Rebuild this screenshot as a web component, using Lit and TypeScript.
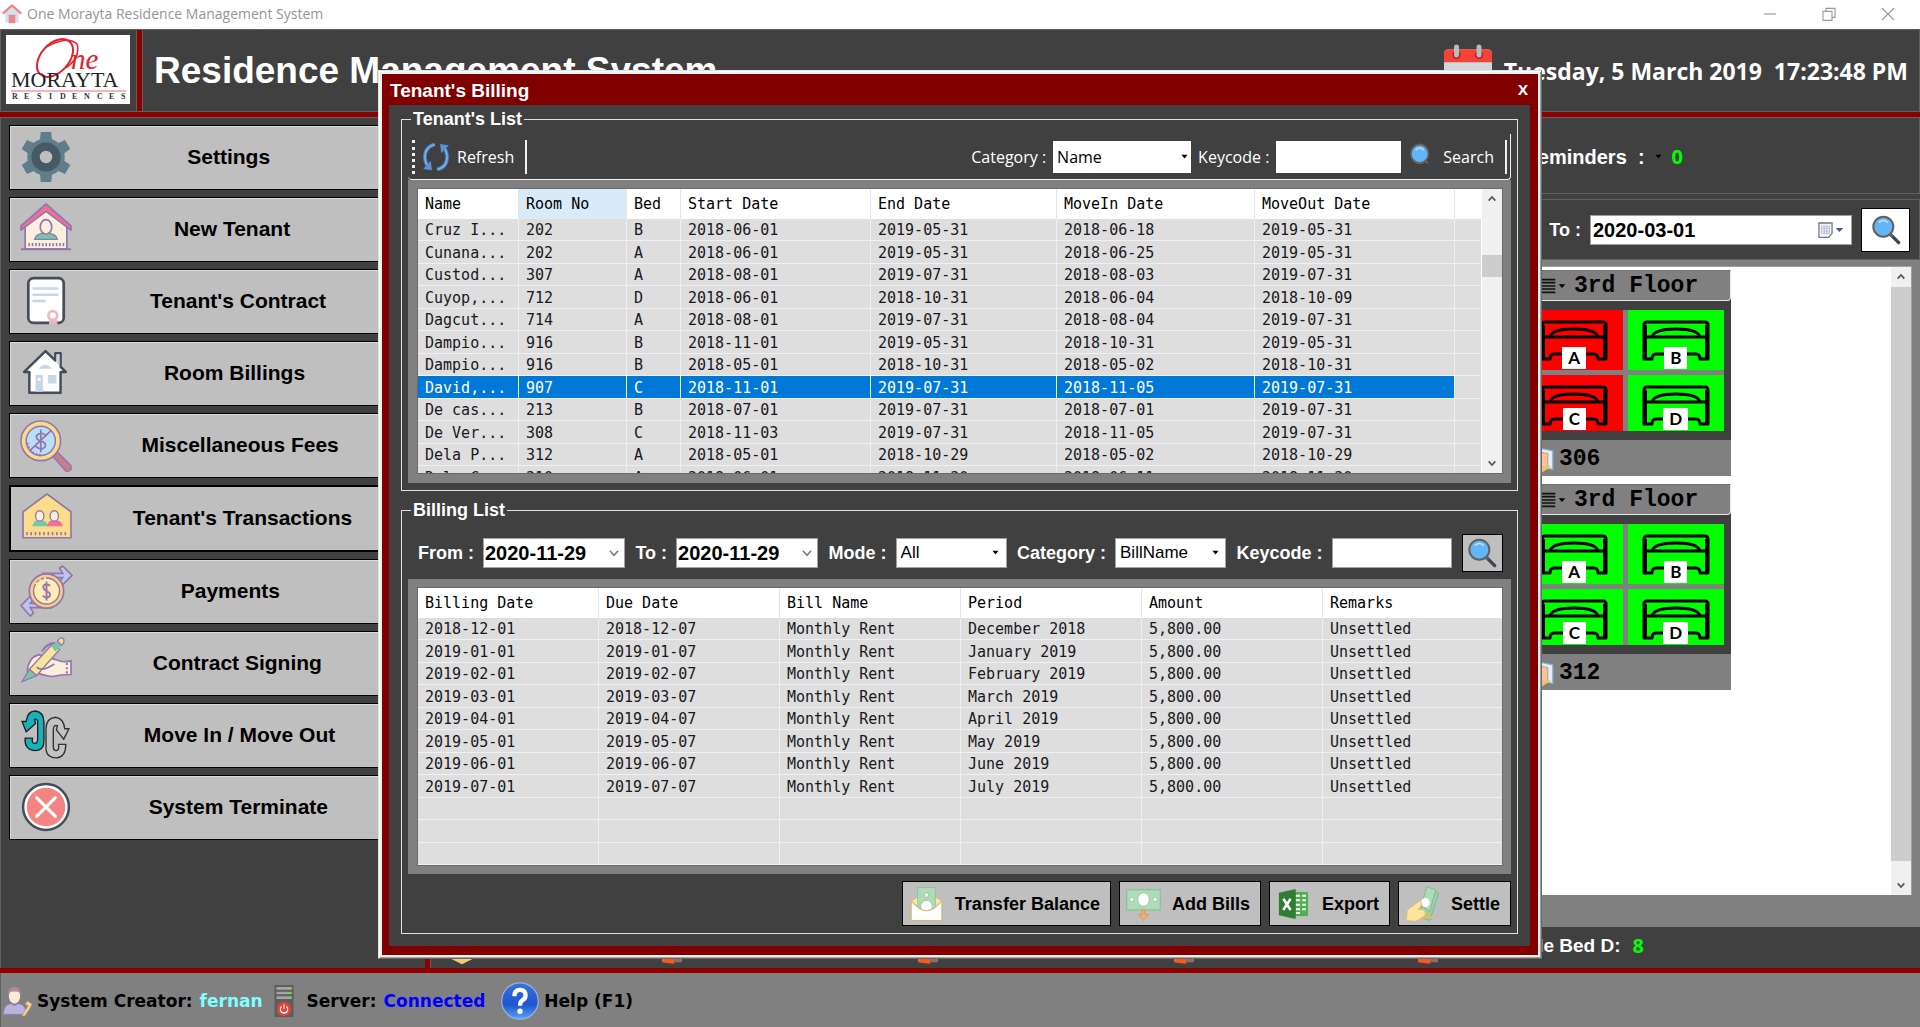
import { LitElement, html, css, svg } from "lit";
import { customElement } from "lit/decorators.js";
import { classMap } from "lit/directives/class-map.js";

const glass = svg`
  <path d="M31 31 L43 43" stroke="#37474f" stroke-width="5" stroke-linecap="round"/>
  <path d="M28 28 L34 34" stroke="#616161" stroke-width="3"/>
  <circle cx="20" cy="19" r="15" fill="#64b5f6" stroke="#616161" stroke-width="3"/>
  <path d="M13 13 Q20 6 27 13" fill="none" stroke="#bbdefb" stroke-width="2.5"/>`;

const P = "#9575ad";

const icons: Record<string, unknown> = {
  glass,
  settings: svg`
    <g fill="#607d8b"><path d="M18 10 L19 0 H29 L30 10z"/><path d="M18 38 L19 48 H29 L30 38z"/>
    <path d="M18 10 L19 0 H29 L30 10z" transform="rotate(60 24 24)"/><path d="M18 10 L19 0 H29 L30 10z" transform="rotate(120 24 24)"/>
    <path d="M18 10 L19 0 H29 L30 10z" transform="rotate(-60 24 24)"/><path d="M18 10 L19 0 H29 L30 10z" transform="rotate(-120 24 24)"/>
    <circle cx="24" cy="24" r="18"/></g>
    <circle cx="24" cy="24" r="10" fill="#bfbfbf" stroke="#455a64" stroke-width="8"/>`,
  tenant: svg`
    <path d="M4 18 L24 4 L44 18 V43 H4z" fill="#faeedd" stroke="${P}" stroke-width="1.6"/>
    <path d="M0 21 L24 0 L48 21 V25 L24 7 L0 25z" fill="#f0709a" stroke="${P}" stroke-width="1.6" stroke-linejoin="round"/>
    <path d="M13 34 Q14 28 24 28 Q34 28 35 34z" fill="#74c8aa" stroke="${P}" stroke-width="1.2"/>
    <ellipse cx="24" cy="22" rx="5.5" ry="7" fill="#faeedd" stroke="${P}" stroke-width="1.6"/>
    <path d="M7 39 H42" stroke="${P}" stroke-width="3" stroke-dasharray="1.5 1.8"/>
    <path d="M0 43.500 H48" stroke="${P}" stroke-width="2"/>`,
  contract: svg`
    <rect x="7" y="2" width="34" height="43" rx="5" fill="#fff" stroke="#464d5a" stroke-width="2.6"/>
    <path d="M12 12h23M12 18h23M12 24h11" stroke="#c8d7e2" stroke-width="2.500" stroke-linecap="round"/>
    <path d="M27 45h8" stroke="#bfbfbf" stroke-width="5"/>
    <path d="M27 40 V47 L30.500 45 L34 47 V40z" fill="#efb8be"/>
    <circle cx="30.500" cy="38" r="4.200" fill="#fff" stroke="#efb8be" stroke-width="2.600"/>`,
  house: svg`
    <path d="M8 23 V43 H38 V23 H43 L38 18 V5 H33 V12 L23.500 3 L3 23z" fill="#fff" stroke="#464d5a" stroke-width="2.400" stroke-linejoin="round"/>
    <path d="M34 6h3v12l-3-4z M17 20 Q23 12 30 20z M14 26h7v16h-7z M26 26h8v8h-8z" fill="#c8d7e2"/>
    <circle cx="17.500" cy="30" r="1.500" fill="#fff"/>`,
  fees: svg`
    <path d="M30 34 L35 31 L48 44 Q49 50 43 49z" fill="#c67f8d" stroke="${P}" stroke-width="1.500"/>
    <circle cx="19" cy="20" r="19" fill="#f8dc8b" stroke="${P}" stroke-width="1.500"/>
    <circle cx="19" cy="20" r="14" fill="#b8def8" stroke="${P}" stroke-width="1.400"/>
    <path d="M24 15 Q19 10 15 15 Q14 19 19 20 Q25 22 23 26 Q19 30 14 25 M19 9v22 M9 29 L29 10" fill="none" stroke="${P}" stroke-width="1.700"/>
    <path d="M6 22 Q8 33 20 34" fill="none" stroke="${P}" stroke-width="2.600" stroke-dasharray="1.500 2"/>`,
  transactions: svg`
    <path d="M24 1 L47 18 V43 H1 V18z" fill="#f9dc8c" stroke="${P}" stroke-width="1.600" stroke-linejoin="round"/>
    <path d="M10 32 Q11 26 17 26 Q24 26 25 32z" fill="#74c8aa"/><path d="M24 32 Q25 26 31 26 Q38 26 39 32z" fill="#f0709a"/>
    <ellipse cx="17" cy="22" rx="4" ry="5" fill="#faeedd" stroke="${P}" stroke-width="1.300"/>
    <ellipse cx="31" cy="22" rx="4" ry="5" fill="#faeedd" stroke="${P}" stroke-width="1.300"/>
    <path d="M4 39 H45" stroke="${P}" stroke-width="3" stroke-dasharray="1.500 2.600"/>`,
  payments: svg`
    <path d="M22 7 H40 L37 2 L40 0 L49 9 L40 18 L37 15 L40 11 H28z" fill="#b9c6ee" stroke="${P}" stroke-width="1.600"/>
    <path d="M27 40 H9 L12 45 L9 48 L0 38 L9 29 L12 32 L9 36 H20z" fill="#b9c6ee" stroke="${P}" stroke-width="1.600"/>
    <circle cx="24.500" cy="24" r="16.500" fill="#f2cf88" stroke="${P}" stroke-width="1.600"/>
    <circle cx="24.500" cy="24" r="12.500" fill="#fdebb5" stroke="${P}" stroke-width="1.300" stroke-dasharray="46 2 3 2 3 2"/>
    <path d="M28 19 Q24 16 21.500 19 Q21 22 24.500 24 Q29 26 27.500 29 Q24 32 21 28.500 M24.500 15v18" fill="none" stroke="${P}" stroke-width="1.800"/>`,
  signing: svg`
    <path d="M6 32 Q7 19 17 16 L34 21 Q40 24 48 22 V35 Q38 35 30 37 Q20 36 12 32z" fill="#faeedd" stroke="${P}" stroke-width="1.600"/>
    <path d="M20 13 Q26 4 33 5" fill="none" stroke="${P}" stroke-width="2"/>
    <path d="M8 30 L31 5 L37 11 L15 36z" fill="#f8e59c" stroke="${P}" stroke-width="1.200"/>
    <path d="M29 8 L35 3 L39 7 L33 13z" fill="#74c8aa"/><path d="M35 3 Q38 -2 41 1 Q42 5 39 7z" fill="#fbd9a0" stroke="${P}" stroke-width="1.200"/>
    <path d="M8 30 L15 36 L1 42z" fill="#74c8aa" stroke="${P}" stroke-width="1.200"/>
    <path d="M15 28 Q20 33 32 25" fill="none" stroke="${P}" stroke-width="1.600"/>
    <path d="M44 24v11" stroke="${P}" stroke-width="2" stroke-dasharray="2 2"/>`,
  move: svg`
    <path d="M4 27 H11 Q10 32 13 32 Q16 32 16 28 V12 Q16 8 13 9 L14 13 L5 21 L1 11 L5 11 Q6 1 14 1 Q22 2 22 12 V30 Q22 39 13 39 Q3 38 4 27z" fill="#17b3bb" stroke="#222" stroke-width="1.300"/>
    <path d="M43 33 H36 Q37 39 34 39 Q31 39 31 35 V19 Q31 14 35 15 L34 19 L41 28 L46 18 L42 18 Q41 8 33 7 Q24 8 24 18 V38 Q25 46 34 46 Q43 45 43 33z" fill="#c3c3c3" stroke="#333" stroke-width="1.300"/>`,
  terminate: svg`
    <circle cx="24" cy="24" r="22" fill="#fff" stroke="#464d5a" stroke-width="2.400"/>
    <circle cx="24" cy="24" r="18.500" fill="#f48481"/><path d="M15 15 L33 33 M33 15 L15 33" stroke="#fff" stroke-width="3" stroke-linecap="round"/>`,
  calendar: svg`
    <path d="M0 40 V9 Q0 4 5 4 H43 Q48 4 48 9 V40 Q48 48 43 48 H5 Q0 48 0 43z" fill="#cfd8dc"/>
    <path d="M0 16 V9 Q0 4 5 4 H43 Q48 4 48 9 V16z" fill="#f44336"/>
    <circle cx="12.500" cy="9" r="4" fill="#b71c1c"/><circle cx="35" cy="9" r="4" fill="#b71c1c"/>
    <path d="M12.500 2 V9 M35 2 V9" stroke="#b0bec5" stroke-width="5" stroke-linecap="round"/>
    <path d="M14 26h20v14H14z" fill="#90a4ae"/>`,
  refresh: svg`
    <g fill="none" stroke="#4d84cb" stroke-width="6"><path d="M22 4 Q4 8 5 26 Q6 35 12 41"/><path d="M26 44 Q44 40 43 22 Q42 13 36 7"/></g>
    <g fill="none" stroke="#8ab6ee" stroke-width="2"><path d="M22 4 Q4 8 5 26 Q6 35 12 41"/><path d="M26 44 Q44 40 43 22 Q42 13 36 7"/></g>
    <path d="M2 43 L17 45 L15 30z M46 5 L31 3 L33 18z" fill="#5b91d8"/>`,
  transfer: svg`
    <path d="M3 20 L24 8 L45 20 V44 H3z" fill="#f8e8a8" stroke="#d8b878"/>
    <rect x="12" y="2" width="24" height="30" fill="#b0dbb8" stroke="#86bd94"/>
    <circle cx="24" cy="12" r="3" fill="#fff" stroke="#86bd94"/><circle cx="24" cy="27" r="8" fill="#fff" stroke="#86bd94"/>
    <path d="M3 20 L14 30 Q24 36 34 30 L45 20 V46 H3z" fill="#fff" stroke="#d8b878" stroke-width="1.500"/>`,
  bills: svg`
    <rect x="1" y="5" width="46" height="27" fill="#b0dbb8" stroke="#86bd94" stroke-width="1.500"/>
    <ellipse cx="24" cy="18" rx="8" ry="9" fill="#fff" stroke="#86bd94"/><circle cx="8" cy="18" r="3" fill="#fff" stroke="#86bd94"/><circle cx="40" cy="18" r="3" fill="#fff" stroke="#86bd94"/>
    <path d="M22 31h4v7h5l-7 8l-7-8h5z" fill="#f4b06a" stroke="#d09050"/>`,
  excel: svg`
    <rect x="24" y="8" width="20" height="32" rx="1" fill="#4caf50"/>
    <path d="M27 13h6M36 13h5M27 19h6M36 19h5M27 25h6M36 25h5M27 31h6M36 31h5M27 36h6" stroke="#fff" stroke-width="2.500"/>
    <path d="M4 9 L27 4 V44 L4 39z" fill="#2e7d32"/><path d="M10 17 L20 32 M20 17 L10 32" stroke="#fff" stroke-width="3.500"/>`,
  settle: svg`
    <path d="M22 30 L40 6 L46 10 L34 46 L22 42z" fill="#9fd1ab" stroke="#6fb083"/>
    <path d="M22 26 L30 1 L42 5 L34 34z" fill="#b0dbb8" stroke="#6fb083"/>
    <ellipse cx="28" cy="22" rx="6" ry="6" fill="#fff"/>
    <path d="M2 46 L3 32 L20 20 Q24 22 22 26 L18 31 L26 32 Q30 36 26 42 L14 47z" fill="#fbe49b" stroke="#dcb96a"/>
    <path d="M22 44 L32 38 L38 44" fill="none" stroke="#e8b85a" stroke-width="3"/>`,
  creator: svg`
    <path d="M2 44 Q3 28 15 28 L20 31 L26 28 Q38 29 39 44z" fill="#b7b4e0" stroke="#8a80b8"/>
    <ellipse cx="20" cy="17" rx="9" ry="11" fill="#fbe9d6"/><path d="M10 15 Q9 3 20 3 Q31 3 30 15 Q28 9 20 10 Q12 9 10 15z" fill="#b58a90"/>
    <path d="M32 46 L42 31 L37 29 L41 24 L48 29 L44 36 L36 47z" fill="#f5d49a" stroke="#c09060"/>`,
  server: svg`
    <rect x="1" y="0" width="46" height="48" rx="2" fill="#5e5e5e"/>
    <path d="M6 5h36M6 12h36M6 19h36" stroke="#a5a5a5" stroke-width="4"/><path d="M35 5h7M35 12h7M35 19h7" stroke="#7ccf5a" stroke-width="3"/>
    <ellipse cx="24" cy="36" rx="17" ry="11" fill="#e8413a"/><path d="M18 32 Q12 38 19 41 Q24 43 30 41 Q36 37 30 32 M24 29v7" fill="none" stroke="#fff" stroke-width="2.500"/>`,
  help: svg`
    <defs><linearGradient id="h" x1="0" y1="0" x2="0" y2="1"><stop offset="0" stop-color="#3c72d8"/><stop offset="0.600" stop-color="#1c55cf"/><stop offset="1" stop-color="#5aa6f8"/></linearGradient></defs>
    <circle cx="24" cy="24" r="23" fill="url(#h)" stroke="#94b4e4" stroke-width="1.500"/>
    <path d="M17 18 Q17 10 24 10 Q31 10 31 17 Q31 21 27 23 Q24 25 24 30" fill="none" stroke="#fff" stroke-width="5.500"/><circle cx="24" cy="37" r="3.400" fill="#fff"/>`,
  app: svg`
    <path d="M8 22 L24 9 L40 22 V45 H8z" fill="#cfe3f3"/><path d="M16 26h16v20H16z" fill="#ef8585"/>
    <path d="M2 23 L24 4 L46 23" fill="none" stroke="#ef8585" stroke-width="6"/>`,
  minimize: svg`<path d="M8 24H40" stroke="#999" stroke-width="3"/>`,
  restore: svg`<path d="M8 17H32V41H8z M16 17V9H40V33H32" fill="none" stroke="#999" stroke-width="3"/>`,
  close: svg`<path d="M8 8L40 40M40 8L8 40" stroke="#999" stroke-width="3"/>`,
  down: svg`<path d="M10 16 L24 32 L38 16" fill="none" stroke="#777" stroke-width="5"/>`,
  caret: svg`<path d="M8 15H40L24 34z" fill="#000"/>`,
  bluecaret: svg`<path d="M4 8H44L24 40z" fill="#3d5a99"/>`,
  up: svg`<path d="M8 32 L24 14 L40 32" fill="none" stroke="#555" stroke-width="8"/>`,
  scrolldown: svg`<path d="M8 16 L24 34 L40 16" fill="none" stroke="#555" stroke-width="8"/>`,
  daypicker: svg`
    <path d="M3 3H45V34L34 46H3z" fill="#f3f3f7" stroke="#777" stroke-width="4"/>
    <path d="M11 12h26v22H11z M11 19h26M11 27h26M20 12v22M28 12v22" fill="none" stroke="#b4b4d0" stroke-width="2.500"/>`,
  menu: svg`<path d="M2 5H46M2 14H46M2 24H46M2 33H46M2 43H46" stroke="#111" stroke-width="5"/>`,
  door: svg`
    <path d="M12 1 L46 9 V43 L12 36z" fill="#dcefff" stroke="#8fb4d6" stroke-width="2"/>
    <path d="M16 9 L38 14 V40 L16 34z" fill="#fbc39b" stroke="#d08a5c" stroke-width="1.500"/><path d="M10 34 L44 38 L30 48z" fill="#eec274"/>`,
  marker: svg`<path d="M24 0 L48 10 V35 L24 47 L0 35 V10z" fill="#f5cb7b"/>`,
  bedcount: svg`<path d="M0 8h18v38L0 44z" fill="#ff5722"/><path d="M18 8h12v36H18z" fill="#8d6e63"/>`,
};

const icon = (name: string, cls = "") =>
  html`<svg class="icon ${cls}" viewBox="0 0 48 48" preserveAspectRatio="none" aria-hidden="true">${icons[name]}</svg>`;

const menu = [
  ["settings", "Settings"], ["tenant", "New Tenant"], ["contract", "Tenant's Contract"],
  ["house", "Room Billings"], ["fees", "Miscellaneous Fees"], ["transactions", "Tenant's Transactions"],
  ["payments", "Payments"], ["signing", "Contract Signing"], ["move", "Move In / Move Out"],
  ["terminate", "System Terminate"],
];

const tenants = [
  ["Cruz I...", "202", "B", "2018-06-01", "2019-05-31", "2018-06-18", "2019-05-31"],
  ["Cunana...", "202", "A", "2018-06-01", "2019-05-31", "2018-06-25", "2019-05-31"],
  ["Custod...", "307", "A", "2018-08-01", "2019-07-31", "2018-08-03", "2019-07-31"],
  ["Cuyop,...", "712", "D", "2018-06-01", "2018-10-31", "2018-06-04", "2018-10-09"],
  ["Dagcut...", "714", "A", "2018-08-01", "2019-07-31", "2018-08-04", "2019-07-31"],
  ["Dampio...", "916", "B", "2018-11-01", "2019-05-31", "2018-10-31", "2019-05-31"],
  ["Dampio...", "916", "B", "2018-05-01", "2018-10-31", "2018-05-02", "2018-10-31"],
  ["David,...", "907", "C", "2018-11-01", "2019-07-31", "2018-11-05", "2019-07-31"],
  ["De cas...", "213", "B", "2018-07-01", "2019-07-31", "2018-07-01", "2019-07-31"],
  ["De Ver...", "308", "C", "2018-11-03", "2019-07-31", "2018-11-05", "2019-07-31"],
  ["Dela P...", "312", "A", "2018-05-01", "2018-10-29", "2018-05-02", "2018-10-29"],
  ["Dela C...", "310", "A", "2018-06-01", "2018-11-30", "2018-06-11", "2018-11-30"],
];

const bills = [
  ["2018-12-01", "2018-12-07", "December 2018"], ["2019-01-01", "2019-01-07", "January 2019"],
  ["2019-02-01", "2019-02-07", "February 2019"], ["2019-03-01", "2019-03-07", "March 2019"],
  ["2019-04-01", "2019-04-07", "April 2019"], ["2019-05-01", "2019-05-07", "May 2019"],
  ["2019-06-01", "2019-06-07", "June 2019"], ["2019-07-01", "2019-07-07", "July 2019"],
].map(([date, due, period]) => [date, due, "Monthly Rent", period, "5,800.00", "Unsettled"]);

const rooms = [
  { no: "306", taken: ["A", "C"] },
  { no: "312", taken: [] as string[] },
];

const base = css`
  * { box-sizing: border-box; }
  button, input, select { font: inherit; color: inherit; margin: 0; border-radius: 0; }
  button { padding: 0; cursor: pointer; }
  .icon { display: block; flex: none; overflow: visible; }
  .scroll { width: 20px; flex: none; background: #f0f0f0; display: flex; flex-direction: column; align-items: center; justify-content: space-between; }
  .scroll button { width: 20px; height: 20px; border: 0; background: none; display: grid; place-items: center; }
  .scroll .icon { width: 10px; height: 10px; }
  .thumb { width: 20px; background: #cdcdcd; }
`;

@customElement("billing-window")
export class BillingWindow extends LitElement {
  static styles = [base, css`
    :host { display: block; background: #f0f0f0; border: 1px solid #e3e3e3; border-right-color: #696969; border-bottom-color: #696969;
      box-shadow: inset 1px 1px #fff, inset -1px -1px #a0a0a0; padding: 3px; color: #fff; font: bold 18px/22px "Liberation Sans", Arial, sans-serif; }
    .frame { background: #800000; padding: 0 8px 9px 7px; }
    .title { display: flex; justify-content: space-between; align-items: center; height: 31px; font-size: 19px; padding: 3px 0 0 1px; }
    .title h2 { font: inherit; margin: 0; }
    .title button { border: 0; background: none; font: bold 15px/20px "Open Sans", sans-serif; width: 14px; padding-bottom: 4px; }
    .body { background: #404040; padding: 3px 12px 12px; display: flex; flex-direction: column; gap: 8px; }
    fieldset { margin: 0; min-width: 0; border: 1px solid #e0e0e0; box-shadow: none; padding: 4px 6px 7px; }
    legend { padding: 0 2px; margin-left: 3px; height: 22px; }
    .tools { display: flex; align-items: center; height: 46px; padding: 0 3px 0 4px; border-bottom: 1px solid #f0f0f0; border-right: 1px solid #f0f0f0; border-radius: 0 0 4px 4px; font: 16px/22px "Open Sans", "Noto Sans", sans-serif; gap: 7px; }
    .grip { border-left: 3px dotted #f0f0f0; height: 34px; }
    .sep { width: 2px; height: 34px; background: #f0f0f0; margin-left: 4px; }
    .space { flex: 1; }
    .tool { display: flex; align-items: center; gap: 7px; border: 0; background: none; }
    .tool .icon { width: 28px; height: 30px; }
    .box { background: #fff; color: #000; display: grid; grid-template-columns: 1fr 20px; align-items: center; border: 1px solid #a0a0a0; height: 30px; }
    .box > select { grid-area: 1 / 1 / 2 / 3; appearance: none; border: 0; background: none; width: 100%; height: 100%; padding: 0 4px; }
    .box > .icon { grid-area: 1 / 2; width: 9px; height: 9px; justify-self: center; pointer-events: none; }
    .box > input { grid-area: 1 / 1; border: 0; background: none; width: 100%; padding: 0 0 0 1px; }
    .box > button { grid-area: 1 / 2; border: 0; background: none; width: 20px; height: 20px; display: grid; place-items: center; }
    .box > button .icon { width: 14px; height: 14px; }
    .tools .box { width: 138px; height: 32px; grid-template-columns: 1fr 14px; border: 0; }
    .field { background: #fff; color: #000; border: 1px solid #a0a0a0; padding: 0 4px; height: 30px; width: 120px; }
    .tools .field { width: 125px; height: 32px; border: 0; }
    .panel { background: #808080; padding: 8px 8px 9px 9px; }
    .panel.bills { padding-bottom: 8px; }
    .list { display: flex; border: 1px solid #6a6a6a; background: #fff; overflow: hidden; }
    .list.tenants { height: 286px; }
    .grid { flex: 1; min-width: 0; }
    table { width: 100%; table-layout: fixed; border-collapse: separate; border-spacing: 0; font: 15px/20px "DejaVu Sans Mono", "Liberation Mono", monospace; color: #000; }
    .tenants table { border-right: 1px solid #fff; }
    th { height: 30px; font-weight: normal; text-align: left; background: #fff; padding: 0 0 0 7px; border-right: 1px solid #e5e5e5; white-space: nowrap; }
    th.hot { background: #d9ebf9; }
    td { background: #dedede; height: 22px; padding: 1px 0 0 7px; border-right: 1px solid #f0f0f0; border-bottom: 1px solid #f0f0f0; white-space: nowrap; overflow: hidden; color: #181820; }
    tr:nth-child(even) td { height: 23px; }
    th:last-child, td:last-child { border-right: 0; }
    tr.on td:not(:last-child) { background: #0078d7; color: #fff; }
    .name { width: 101px; } .room { width: 108px; } .bed { width: 54px; } .start { width: 190px; }
    .end { width: 186px; } .in { width: 198px; } .out { width: 200px; } .bill { width: 181px; }
    .thumb { height: 22px; }
    .above { height: 46px; }
    .filters { display: flex; align-items: center; justify-content: space-between; height: 54px; padding: 1px 8px 0 10px; }
    .pair { display: flex; align-items: center; gap: 9px; }
    .date { width: 142px; font-size: 20px; }
    .filters select { font: 17px/22px "Liberation Sans", Arial, sans-serif; }
    .pick { width: 111px; }
    .find { width: 41px; height: 38px; border: 1px solid #000; background: #bfbfbf; display: grid; place-items: center; }
    .find .icon { width: 32px; height: 32px; }
    .actions { display: flex; justify-content: flex-end; gap: 8px; margin-top: 7px; }
    .action { display: flex; align-items: center; gap: 11px; height: 45px; padding: 0 10px 0 6px; background: #bfbfbf; border: 1px solid #000; color: #000; }
    .action .icon { width: 35px; height: 36px; }
  `];

  private tenantColumns = [["Name", "name"], ["Room No", "room hot"], ["Bed", "bed"], ["Start Date", "start"], ["End Date", "end"], ["MoveIn Date", "in"], ["MoveOut Date", "out"], ["", ""]];
  private billColumns = ["Billing Date", "Due Date", "Bill Name", "Period", "Amount", "Remarks"];

  private dateField(id: string, label: string) {
    return html`<div class="pair"><label for=${id}>${label} :</label>
      <div class="box date"><input id=${id} type="text" value="2020-11-29"><button aria-label="Open calendar">${icon("down")}</button></div></div>`;
  }

  render() {
    return html`<div class="frame">
      <div class="title"><h2>Tenant's Billing</h2><button>X</button></div>
      <div class="body">
        <fieldset>
          <legend>Tenant's List</legend>
          <div class="tools">
            <span class="grip"></span>
            <button class="tool">${icon("refresh")}Refresh</button>
            <span class="sep"></span><span class="space"></span>
            <label for="cat1">Category :</label>
            <div class="box"><select id="cat1"><option>Name</option></select>${icon("caret")}</div>
            <label for="key1">Keycode :</label>
            <input class="field" id="key1" type="text">
            <button class="tool">${icon("glass")}Search</button>
            <span class="sep"></span>
          </div>
          <div class="panel"><div class="list tenants">
            <div class="grid"><table>
              <thead><tr>${this.tenantColumns.map(([t, c]) => html`<th class=${c}>${t}</th>`)}</tr></thead>
              <tbody>${tenants.map((r) => html`<tr class=${classMap({ on: r[1] === "907" })}>${r.map((c) => html`<td>${c}</td>`)}<td></td></tr>`)}</tbody>
            </table></div>
            <div class="scroll"><button aria-label="Scroll up">${icon("up")}</button><span class="above"></span><span class="thumb"></span>
              <span class="space"></span><button aria-label="Scroll down">${icon("scrolldown")}</button></div>
          </div></div>
        </fieldset>
        <fieldset>
          <legend>Billing List</legend>
          <div class="filters">
            ${this.dateField("from", "From")}
            ${this.dateField("to", "To")}
            <div class="pair"><label for="mode">Mode :</label><div class="box pick"><select id="mode"><option>All</option></select>${icon("caret")}</div></div>
            <div class="pair"><label for="cat2">Category :</label><div class="box pick"><select id="cat2"><option>BillName</option></select>${icon("caret")}</div></div>
            <div class="pair"><label for="key2">Keycode :</label><input class="field" id="key2" type="text"></div>
            <button class="find" aria-label="Search bills">${icon("glass")}</button>
          </div>
          <div class="panel bills"><div class="list"><div class="grid"><table>
            <thead><tr>${this.billColumns.map((t, i) => html`<th class=${i < 5 ? "bill" : ""}>${t}</th>`)}</tr></thead>
            <tbody>${bills.map((r) => html`<tr>${r.map((c) => html`<td>${c}</td>`)}</tr>`)}
              ${[0, 1, 2].map(() => html`<tr>${this.billColumns.map(() => html`<td></td>`)}</tr>`)}</tbody>
          </table></div></div></div>
          <div class="actions">
            <button class="action">${icon("transfer")}Transfer Balance</button>
            <button class="action">${icon("bills")}Add Bills</button>
            <button class="action">${icon("excel")}Export</button>
            <button class="action">${icon("settle")}Settle</button>
          </div>
        </fieldset>
      </div>
    </div>`;
  }
}

@customElement("room-card")
export class RoomCard extends LitElement {
  static properties = { no: {}, taken: { attribute: false } };
  declare no: string;
  declare taken: string[];

  static styles = [base, css`
    :host { display: block; width: 212px; background: #404040; color: #000; font: bold 23px/30px "Liberation Mono", "Courier New", monospace; }
    .head { display: flex; align-items: center; height: 31px; background: #808080; border: 1px solid #e8e8e8; border-top-color: #707070; border-radius: 0 0 4px 4px; padding-left: 20px; }
    .head .icon { width: 16px; height: 16px; }
    .head .icon.arrow { width: 10px; height: 10px; margin: 0 7px 0 1px; }
    .beds { display: grid; grid-template: 60px 56px / 1fr 1fr; gap: 5px; background: #808080; margin: 9px 7px; }
    .bed { display: grid; border: 0; padding: 0; background: #0f0; justify-items: center; }
    .bed.taken { background: #f00; }
    .bed .icon { grid-area: 1 / 1; width: 68px; height: 40px; margin-top: 10px; }
    .tag { grid-area: 1 / 1; align-self: end; background: #fff; font: bold 17px/22px Lato, sans-serif; padding: 0 6px; margin-bottom: 1px; }
    .foot { display: flex; align-items: center; gap: 5px; background: #808080; height: 36px; padding: 2px 6px 0 5px; }
    .foot .icon { width: 30px; height: 26px; }
  `];

  render() {
    return html`<div class="head">${icon("menu")}${icon("caret", "arrow")}<span>3rd Floor</span></div>
      <div class="beds">${["A", "B", "C", "D"].map((b) => html`<button class=${classMap({ bed: true, taken: this.taken.includes(b) })}>
        <svg class="icon" viewBox="0 0 68 40" preserveAspectRatio="none" fill="none" stroke="#000" stroke-width="3" aria-hidden="true">
          <path d="M2 17 V5 Q2 2 5 2 H63 Q66 2 66 5 V39 H58 Q58 34 54 34 H14 Q10 34 10 39 H2 V17 H66" stroke-linejoin="round"/>
          <path d="M10 17 Q12 9 34 9 Q56 9 58 17"/><path d="M4 5V38 M64 5V38" stroke-width="2"/></svg>
        <span class="tag">${b}</span></button>`)}</div>
      <div class="foot">${icon("door")}<span>${this.no}</span></div>`;
  }
}

@customElement("app-root")
export class AppRoot extends LitElement {
  static styles = [base, css`
    :host { display: flex; flex-direction: column; position: relative; min-height: 100vh; background: #404040; color: #fff; font: bold 18px/22px "Liberation Sans", Arial, sans-serif; overflow: hidden; }
    .bar { display: flex; align-items: center; height: 29px; background: #fff; color: #959595; padding: 0 16px 2px 2px; font: 14px/22px "Open Sans", "Noto Sans", sans-serif; }
    .bar > .icon { width: 20px; height: 20px; margin-right: 5px; }
    .wins { margin-left: auto; display: flex; gap: 26px; }
    .wins button { width: 33px; height: 22px; display: grid; place-items: center; border: 0; background: none; }
    .wins .icon { width: 18px; height: 18px; }
    header { display: flex; height: 83px; border: 1px solid #606060; }
    .brand { width: 136px; padding: 5px; border-right: 1px solid #606060; }
    .brand svg { display: block; width: 124px; height: 69px; background: #fff; }
    .rule { background: #8b0000; width: 5px; flex: none; }
    .head { flex: 1; display: flex; align-items: center; padding: 1px 11px 0 11px; border-left: 1px solid #606060; }
    .head h1 { font-size: 37px; line-height: 44px; margin: 0; white-space: nowrap; }
    .clock { margin-left: auto; display: flex; align-items: center; gap: 12px; font: bold 23px/30px "Open Sans", "Noto Sans", sans-serif; white-space: pre; }
    .clock .icon { width: 48px; height: 52px; }
    .line { background: #8b0000; height: 5px; flex: none; }
    main { flex: 1; display: flex; }
    aside { width: 425px; padding: 7px 8px 0 8px; border-left: 1px solid #606060; border-top: 1px solid #606060; }
    nav { display: grid; gap: 7px; height: 715px; }
    .item { display: flex; align-items: center; background: #bfbfbf; border: 1px solid #000; box-shadow: inset 1px 1px #dadada; color: #000; font-size: 21px; line-height: 26px; padding: 0 0 2px 6px; }
    .item.on { border-width: 2px; box-shadow: none; }
    .item .icon { width: 60px; height: 50px; padding: 0 5px; margin-right: 14px; }
    .item::before { content: ""; order: 1; flex: 2; }
    .item::after { content: ""; order: 3; flex: 3; }
    .item span { order: 2; white-space: nowrap; }
    .work { flex: 1; min-width: 0; display: flex; flex-direction: column; }
    .remind { display: flex; align-items: center; justify-content: flex-end; height: 77px; border: 1px solid #606060; padding: 2px 236px 0 0; font-size: 20px; margin-bottom: 5px; white-space: pre; }
    .remind .icon { width: 9px; height: 9px; margin: 0 9px; }
    .green { color: #0f0; font: bold 20px/26px "Open Sans", "Noto Sans", sans-serif; }
    .filter { display: flex; align-items: center; justify-content: flex-end; gap: 9px; height: 61px; border: 1px solid #606060; padding: 0 9px; }
    .date { width: 262px; height: 30px; display: flex; align-items: center; background: #fff; border: 1px solid #a0a0a0; color: #000; font-size: 20px; padding: 0 7px 0 0; }
    .date input { flex: 1; min-width: 0; border: 0; background: none; padding: 0 2px; }
    .date button { display: flex; align-items: center; gap: 2px; border: 0; background: none; }
    .date .icon { width: 15px; height: 16px; }
    .date .icon.small { width: 9px; height: 6px; }
    .find { width: 49px; height: 44px; border: 1px solid #000; background: #fff; display: grid; place-items: center; }
    .find .icon { width: 32px; height: 32px; }
    .panel { flex: 1; display: flex; background: #808080; padding: 6px 8px 32px 8px; }
    .rooms { flex: 1; display: flex; background: #fff; border: 1px solid #a0a0a0; border-bottom: 0; }
    .cards { flex: 1; display: flex; flex-direction: column; align-items: flex-end; gap: 8px; padding: 3px 160px 0 0; }
    .thumb { flex: 1; margin-bottom: 14px; }
    .counts { height: 41px; display: flex; align-items: center; padding: 0 276px 3px 0; border-left: 1px solid #606060; }
    .marks { flex: 1; display: grid; grid-template-columns: 216px 256px 256px 244px 1fr; padding-left: 15px; align-self: end; }
    .marks .icon { width: 32px; height: 32px; }
    .count { font-size: 19px; margin-right: 12px; white-space: nowrap; }
    footer { display: flex; align-items: center; height: 54px; background: #808080; border-left: 1px solid #606060; color: #000; padding: 2px 0 0 1px; font: bold 17px/22px "DejaVu Sans", Verdana, sans-serif; gap: 7px; }
    .stat { display: flex; align-items: center; gap: 5px; }
    .stat .icon { width: 30px; height: 32px; }
    .stat .icon.tower { width: 20px; margin: 0 8px 0 4px; }
    .stat .icon.big { width: 38px; height: 38px; margin-left: 9px; }
    .user { color: #80ffff; } .ok { color: #00f; }
    billing-window { position: absolute; top: 70px; left: 378px; right: 378px; }
  `];

  render() {
    return html`
      <div class="bar">${icon("app")}<span>One Morayta Residence Management System</span>
        <div class="wins"><button aria-label="Minimize">${icon("minimize")}</button><button aria-label="Restore">${icon("restore")}</button><button aria-label="Close">${icon("close")}</button></div></div>
      <header>
        <div class="brand"><svg viewBox="0 0 124 69" role="img" aria-label="One Morayta Residences">
          <text x="65" y="34" font-size="29" fill="#e8202a" font-family="Liberation Serif, serif" font-style="italic" font-weight="normal">ne</text>
          <g fill="none" stroke="#e8202a"><ellipse cx="49" cy="23" rx="14" ry="22" transform="rotate(42 49 23)" stroke-width="2"/>
            <path d="M40 12 Q62 0 71 9 Q75 22 60 33" stroke-width="1.500"/></g>
          <text x="5" y="52" font-size="22" font-weight="normal" fill="#222" font-family="Liberation Serif, serif">MORAYTA</text>
          <path d="M5 56H120" stroke="#ef6a70"/>
          <text x="6 18 31 43 54 66 78 91 103 115" y="64" font-size="8" font-weight="bold" fill="#333" font-family="Liberation Serif, serif">RESIDENCES</text>
        </svg></div>
        <div class="rule"></div>
        <div class="head"><h1>Residence Management System</h1>
          <div class="clock">${icon("calendar")}<span>Tuesday, 5 March 2019  17:23:48 PM</span></div></div>
      </header>
      <div class="line"></div>
      <main>
        <aside><nav>${menu.map(([i, t]) => html`<button class=${classMap({ item: true, on: i === "transactions" })}>${icon(i)}<span>${t}</span></button>`)}</nav></aside>
        <div class="rule"></div>
        <div class="work">
          <div class="remind"><span>Reminders  :</span>${icon("caret")}<span class="green">0</span></div>
          <div class="filter"><label for="until">To :</label>
            <div class="date"><input id="until" type="text" value="2020-03-01"><button aria-label="Open calendar">${icon("daypicker")}${icon("bluecaret", "small")}</button></div>
            <button class="find" aria-label="Search rooms">${icon("glass")}</button></div>
          <div class="panel"><div class="rooms">
            <div class="cards">${rooms.map((r) => html`<room-card .no=${r.no} .taken=${r.taken}></room-card>`)}</div>
            <div class="scroll"><button aria-label="Scroll up">${icon("up")}</button><span class="thumb"></span><button aria-label="Scroll down">${icon("scrolldown")}</button></div>
          </div></div>
          <div class="counts"><div class="marks">${icon("marker")}${icon("bedcount")}${icon("bedcount")}${icon("bedcount")}${icon("bedcount")}</div>
            <span class="count">Available Bed D:</span><span class="green">8</span></div>
        </div>
      </main>
      <div class="line"></div>
      <footer>
        <div class="stat">${icon("creator")}<span>System Creator:</span></div><span class="user">fernan</span>
        <div class="stat">${icon("server", "tower")}<span>Server:</span></div><span class="ok">Connected</span>
        <div class="stat">${icon("help", "big")}<span>Help (F1)</span></div>
      </footer>
      <billing-window role="dialog" aria-label="Tenant's Billing"></billing-window>`;
  }
}
